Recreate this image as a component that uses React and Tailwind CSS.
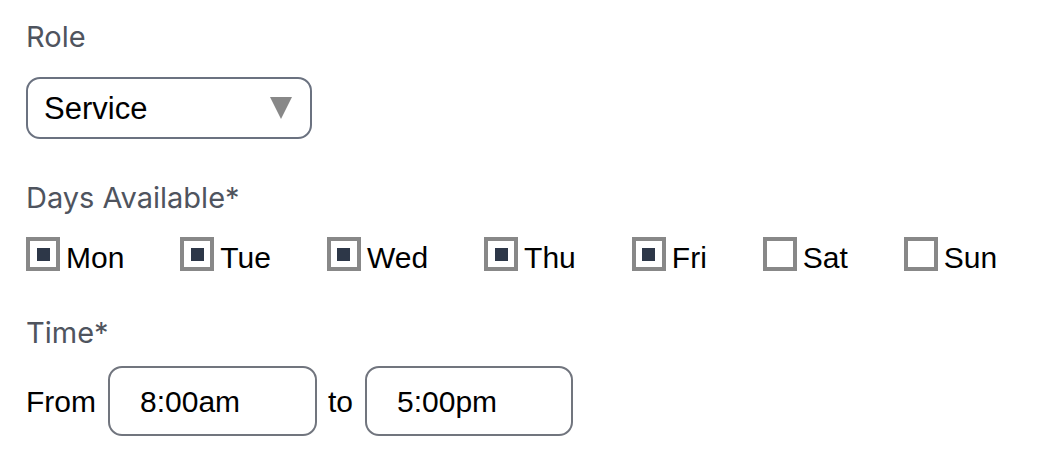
const days = [
  { name: "Mon", on: true },
  { name: "Tue", on: true },
  { name: "Wed", on: true },
  { name: "Thu", on: true },
  { name: "Fri", on: true },
  { name: "Sat", on: false },
  { name: "Sun", on: false },
];

function Label({ children, className = "" }) {
  return (
    <p
      className={`text-[29px] leading-[34px] text-[#4f545e] ${className}`}
      style={{ fontFamily: "Inter, 'Open Sans', sans-serif" }}
    >
      {children}
    </p>
  );
}

function DayCheck({ name, on }) {
  return (
    <label className="flex items-start">
      <span className="flex h-[34px] w-[34px] items-center justify-center border-4 border-[#888888] bg-white">
        {on && <span className="h-[13px] w-[13px] bg-[#2d3748]" />}
      </span>
      <span className="ml-[6px] mt-[4px] text-[30px] leading-[34px] text-black">{name}</span>
    </label>
  );
}

export default function App() {
  return (
    <div
      className="min-h-screen bg-white px-[26px] pt-[20px] text-black"
      style={{ fontFamily: "'Liberation Sans', Arial, sans-serif" }}
    >
      <Label>Role</Label>
      <div className="mt-[23px] flex h-[62px] w-[286px] items-center justify-between rounded-[14px] border-2 border-[#6b7280] pl-[16px] pr-[18px]">
        <span className="text-[31px] leading-none">Service</span>
        <svg width="22" height="22" viewBox="0 0 22 22">
          <polygon points="0,0 22,0 11,22" fill="#888888" />
        </svg>
      </div>

      <Label className="mt-[42px]">Days Available*</Label>
      <div className="mt-[22px] flex items-center gap-[56px]">
        {days.map((d) => (
          <DayCheck key={d.name} {...d} />
        ))}
      </div>

      <Label className="mt-[41px]">Time*</Label>
      <div className="mt-[16px] flex items-center">
        <span className="text-[30px]">From</span>
        <div className="ml-[12px] flex h-[70px] w-[209px] items-center rounded-[14px] border-2 border-[#71757e] pl-[30px] text-[30px]">
          8:00am
        </div>
        <span className="ml-[11px] text-[30px]">to</span>
        <div className="ml-[12px] flex h-[70px] w-[208px] items-center rounded-[14px] border-2 border-[#71757e] pl-[30px] text-[30px]">
          5:00pm
        </div>
      </div>
    </div>
  );
}
